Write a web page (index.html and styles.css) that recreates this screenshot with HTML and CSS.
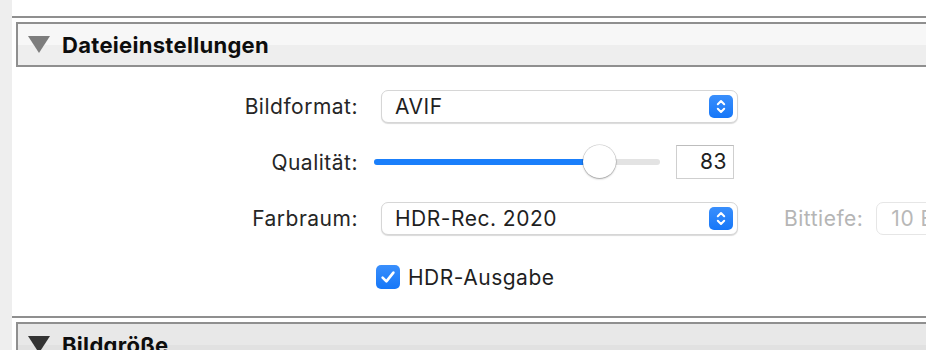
FILE: index.html
```html
<!DOCTYPE html>
<html lang="de">
<head>
    <meta charset="UTF-8">
    <meta name="viewport" content="width=device-width, initial-scale=1.0">
    <title>Exportieren</title>
    <link rel="stylesheet" href="styles.css">
</head>
<body>
    <div class="sidebar"></div>
    <div class="main">
        <section class="panel">
            <div class="panel-header">
                <span class="disclosure"></span>
                <h2>Dateieinstellungen</h2>
            </div>
            <div class="panel-body">
                <div class="form">
                    <label class="lbl">Bildformat:</label>
                    <div class="ctrl">
                        <div class="select">
                            <span>AVIF</span>
                            <span class="stepper">
                                <svg width="24" height="23" viewBox="0 0 24 23"><path d="M8.8 9.2 L12 6 L15.2 9.2 M8.8 13.8 L12 17 L15.2 13.8" fill="none" stroke="#fff" stroke-width="2" stroke-linecap="round" stroke-linejoin="round"/></svg>
                            </span>
                        </div>
                    </div>

                    <label class="lbl">Qualität:</label>
                    <div class="ctrl slider-row">
                        <div class="slider">
                            <div class="track-fill"></div>
                            <div class="thumb"></div>
                        </div>
                        <div class="numfield">83</div>
                    </div>

                    <label class="lbl">Farbraum:</label>
                    <div class="ctrl">
                        <div class="select">
                            <span>HDR-Rec. 2020</span>
                            <span class="stepper">
                                <svg width="24" height="23" viewBox="0 0 24 23"><path d="M8.8 9.2 L12 6 L15.2 9.2 M8.8 13.8 L12 17 L15.2 13.8" fill="none" stroke="#fff" stroke-width="2" stroke-linecap="round" stroke-linejoin="round"/></svg>
                            </span>
                        </div>
                        <span class="lbl disabled bit-lbl">Bittiefe:</span>
                        <div class="select disabled-field"><span>10 Bit</span></div>
                    </div>

                    <span></span>
                    <div class="ctrl check-row">
                        <span class="checkbox">
                            <svg width="24" height="24" viewBox="0 0 24 24"><path d="M6.6 12.6 L10.4 16.4 L17.4 7.6" fill="none" stroke="#fff" stroke-width="2.6" stroke-linecap="round" stroke-linejoin="round"/></svg>
                        </span>
                        <span>HDR-Ausgabe</span>
                    </div>
                </div>
            </div>
        </section>

        <section class="panel">
            <div class="panel-header active">
                <span class="disclosure"></span>
                <h2>Bildgröße</h2>
            </div>
        </section>
    </div>
</body>
</html>
```

FILE: styles.css
```css
body {
    margin: 0;
    display: flex;
    height: 350px;
    overflow: hidden;
    background: white;
    font-family: Inter, "Noto Sans", sans-serif;
    color: #262626;
}
.sidebar {
    width: 12px;
    flex-shrink: 0;
    background-color: #eeeeee;
}
.main {
    width: 1100px;
    flex-shrink: 0;
    padding-top: 16px;
}
.panel {
    border-top: 2px solid #8f8f8f;
    padding: 4px 0 0 4px;
}
.panel-header {
    height: 41px;
    border: 2px solid #8f8f8f;
    border-right: none;
    display: flex;
    align-items: center;
    gap: 12px;
    padding-left: 10px;
    background: linear-gradient(#f7f7f7 50%, #eeeeee 50%);
}
.panel-header h2 {
    margin: 0;
    font-size: 22px;
    font-weight: 700;
    letter-spacing: 0.3px;
    color: #0d0d0d;
}
.disclosure {
    width: 0;
    height: 0;
    border-left: 11px solid transparent;
    border-right: 11px solid transparent;
    border-top: 17px solid #7d7d7d;
}
.panel-header.active {
    background: linear-gradient(#e8e8e8 50%, #e1e1e1 50%);
}
.panel-header.active .disclosure {
    border-top-color: #333;
}
.panel-body {
    height: 227px;
    padding-top: 22px;
}
.form {
    display: grid;
    grid-template-columns: 342px auto;
    grid-template-rows: 34px 34px 34px 40px;
    column-gap: 23px;
    row-gap: 22px;
    align-items: center;
    font-size: 21px;
    letter-spacing: 0.5px;
}
.lbl {
    text-align: right;
}
.lbl.disabled {
    color: #b5b5b5;
}
.ctrl {
    display: flex;
    align-items: center;
}
.select {
    box-sizing: border-box;
    width: 357px;
    height: 33px;
    display: flex;
    align-items: center;
    justify-content: space-between;
    padding: 0 4px 0 13px;
    background: white;
    border: 1px solid #d6d6d6;
    border-radius: 7px;
    box-shadow: 0 1px 1px rgba(0,0,0,0.15);
    color: #1f1f1f;
}
.stepper {
    width: 24px;
    height: 23px;
    border-radius: 5px;
    background: linear-gradient(#3a8ffc, #1677f8);
    display: flex;
}
.slider-row {
    margin-left: -7px;
    gap: 16px;
}
.slider {
    position: relative;
    width: 286px;
    height: 6px;
    border-radius: 3px;
    background: #e3e3e3;
}
.track-fill {
    width: 226px;
    height: 6px;
    border-radius: 3px;
    background: #1a7ffb;
}
.thumb {
    position: absolute;
    left: 209px;
    top: -14px;
    width: 33px;
    height: 33px;
    border-radius: 50%;
    background: white;
    box-shadow: 0 0 0 0.5px rgba(0,0,0,0.2), 0 1px 2px rgba(0,0,0,0.3);
}
.numfield {
    box-sizing: border-box;
    width: 58px;
    height: 34px;
    border: 1px solid #cfcfcf;
    border-top-color: #bdbdbd;
    padding-right: 6px;
    text-align: right;
    line-height: 32px;
    color: #1f1f1f;
}
.bit-lbl {
    margin-left: 46px;
    margin-right: 13px;
}
.disabled-field {
    width: 120px;
    box-shadow: none;
    border-color: #e6e6e6;
    color: #b8b8b8;
    justify-content: flex-start;
    padding-left: 14px;
}
.check-row {
    margin-left: -5px;
    gap: 8px;
    color: #1f1f1f;
}
.checkbox {
    width: 24px;
    height: 24px;
    border-radius: 5px;
    background: linear-gradient(#3a8ffc, #1677f8);
    display: flex;
}
```
